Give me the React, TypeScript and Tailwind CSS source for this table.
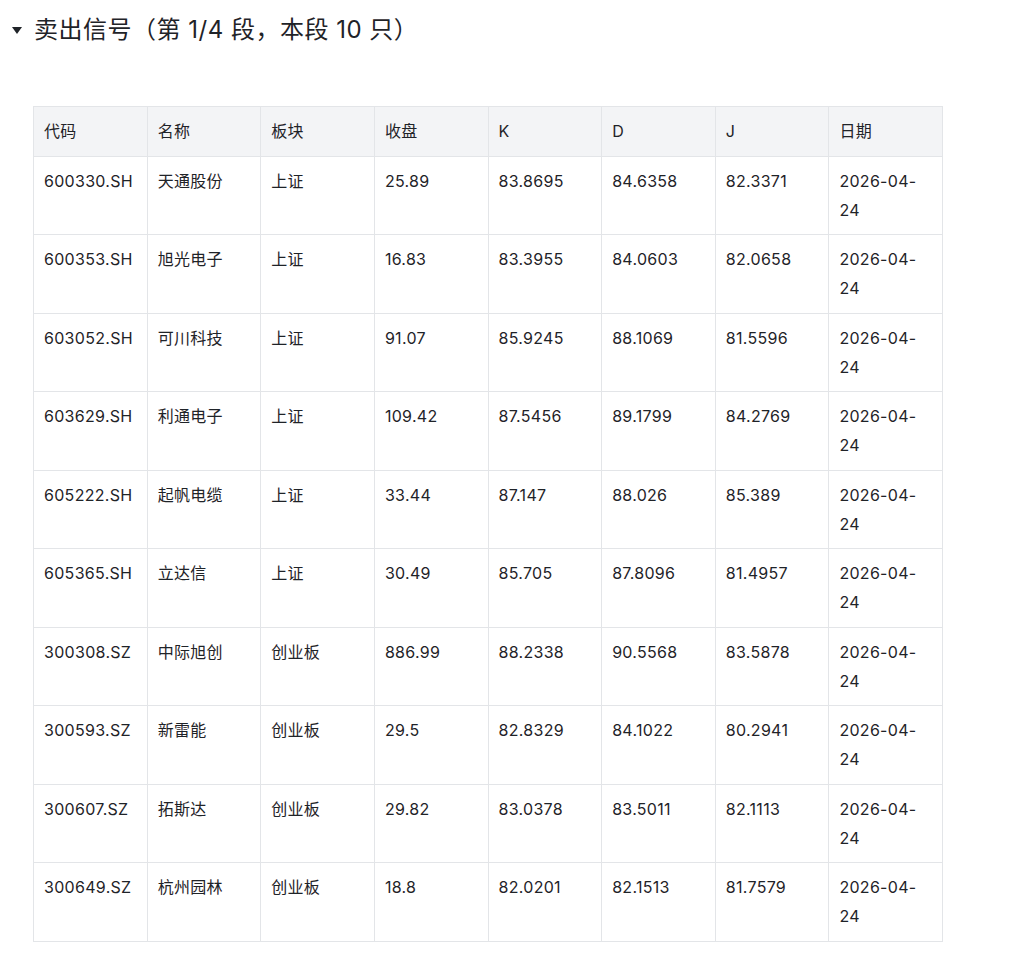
import React from "react";

const rows = [
  ["600330.SH", "天通股份", "上证", "25.89", "83.8695", "84.6358", "82.3371"],
  ["600353.SH", "旭光电子", "上证", "16.83", "83.3955", "84.0603", "82.0658"],
  ["603052.SH", "可川科技", "上证", "91.07", "85.9245", "88.1069", "81.5596"],
  ["603629.SH", "利通电子", "上证", "109.42", "87.5456", "89.1799", "84.2769"],
  ["605222.SH", "起帆电缆", "上证", "33.44", "87.147", "88.026", "85.389"],
  ["605365.SH", "立达信", "上证", "30.49", "85.705", "87.8096", "81.4957"],
  ["300308.SZ", "中际旭创", "创业板", "886.99", "88.2338", "90.5568", "83.5878"],
  ["300593.SZ", "新雷能", "创业板", "29.5", "82.8329", "84.1022", "80.2941"],
  ["300607.SZ", "拓斯达", "创业板", "29.82", "83.0378", "83.5011", "82.1113"],
  ["300649.SZ", "杭州园林", "创业板", "18.8", "82.0201", "82.1513", "81.7579"],
];

const headers = ["代码", "名称", "板块", "收盘", "K", "D", "J", "日期"];

export default function App() {
  return (
    <div
      className="min-h-[958px] bg-white text-[#1f2328]"
      style={{ fontFamily: "Inter, 'Noto Sans CJK SC', sans-serif" }}
    >
      <div className="flex items-center pl-[12px] pt-[14px] h-[46px]">
        <svg width="10" height="7" viewBox="0 0 10 7" className="mr-[12px]">
          <polygon points="0,0 10,0 5,7" fill="#1f2328" />
        </svg>
        <span className="text-[24px] leading-[32px] tracking-[0.5px]">卖出信号（第 1/4 段，本段 10 只）</span>
      </div>
      <div className="pl-[33px] pt-[60px]">
        <table className="table-fixed border-collapse w-[910px] text-[16px] leading-[28.75px] tracking-[0.3px]">
          <thead>
            <tr className="bg-[#f3f4f6]">
              {headers.map((h) => (
                <th
                  key={h}
                  className="border border-[#e3e5e8] px-[10px] py-[10px] text-left font-normal align-top"
                >
                  {h}
                </th>
              ))}
            </tr>
          </thead>
          <tbody>
            {rows.map((r) => (
              <tr key={r[0]}>
                {r.map((c, i) => (
                  <td
                    key={i}
                    className="border border-[#e3e5e8] px-[10px] py-[10px] align-top"
                  >
                    {c}
                  </td>
                ))}
                <td className="border border-[#e3e5e8] px-[10px] py-[10px] align-top">
                  2026-04-
                  <br />
                  24
                </td>
              </tr>
            ))}
          </tbody>
        </table>
      </div>
    </div>
  );
}
